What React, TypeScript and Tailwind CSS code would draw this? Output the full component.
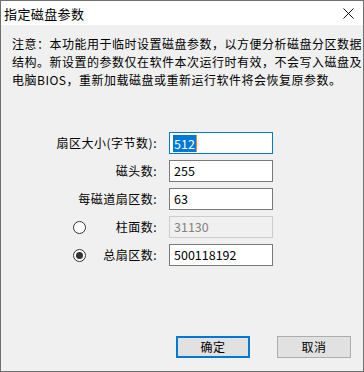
import React from "react";

const font = { fontFamily: '"Noto Sans CJK SC", "Noto Sans", sans-serif' };

type Row = {
  label: string;
  value: string;
  radio?: "on" | "off";
  disabled?: boolean;
  selected?: boolean;
};

const rows: Row[] = [
  { label: "扇区大小(字节数):", value: "512", selected: true },
  { label: "磁头数:", value: "255" },
  { label: "每磁道扇区数:", value: "63" },
  { label: "柱面数:", value: "31130", radio: "off", disabled: true },
  { label: "总扇区数:", value: "500118192", radio: "on" },
];

const noteLines = [
  "注意：本功能用于临时设置磁盘参数，以方便分析磁盘分区数据",
  "结构。新设置的参数仅在软件本次运行时有效，不会写入磁盘及",
  "电脑BIOS，重新加载磁盘或重新运行软件将会恢复原参数。",
];

function Radio({ checked }: { checked: boolean }) {
  return (
    <span className="w-[13px] h-[13px] rounded-full border border-[#333] bg-white flex items-center justify-center">
      {checked && <span className="w-[7px] h-[7px] rounded-full bg-[#333]" />}
    </span>
  );
}

function Field({ row }: { row: Row }) {
  let box = "border-[#7a7a7a] bg-white text-black";
  if (row.selected) box = "border-[#0078d7] bg-white text-black";
  if (row.disabled) box = "border-[#cccccc] bg-[#f0f0f0] text-[#838383]";
  return (
    <div className={`w-[104px] h-[22px] border flex items-center pl-[3px] text-[12.5px] ${box}`}>
      {row.selected ? (
        <>
          <span className="bg-[#0078d7] text-white leading-[17px] px-[1px]">{row.value}</span>
          <span className="w-[1px] h-[17px] bg-[#f08a24]" />
        </>
      ) : (
        <span className="px-[1px]">{row.value}</span>
      )}
    </div>
  );
}

export default function App() {
  return (
    <div className="w-[364px] h-[372px] border border-[#6f6f6f] bg-[#f0f0f0] flex flex-col text-black" style={font}>
      {/* title bar */}
      <div className="h-[24px] bg-white flex items-center justify-between pl-[3px] pr-[9px]">
        <span className="text-[13px] leading-none tracking-[0.4px]">指定磁盘参数</span>
        <svg width="11" height="11" viewBox="0 0 11 11">
          <path d="M0.5 0.5 L10.5 10.5 M10.5 0.5 L0.5 10.5" stroke="#111" strokeWidth="1" />
        </svg>
      </div>

      <div className="pl-[11px] pt-[10px] text-[12px] leading-[18px] tracking-[0.5px]">
        {noteLines.map((l) => (
          <div key={l} className="whitespace-nowrap">
            {l}
          </div>
        ))}
      </div>

      <div className="mt-[43px] grid grid-cols-[72px_13px_71px_104px] gap-x-0 gap-y-[6px]">
        {rows.map((r) =>
          r.radio ? (
            <React.Fragment key={r.label}>
              <span className="col-start-2 h-[22px] flex items-center">
                <Radio checked={r.radio === "on"} />
              </span>
              <span className="col-start-3 h-[22px] flex items-center justify-end text-[12px] tracking-[0.5px] whitespace-nowrap">
                {r.label}
              </span>
              <span className="ml-[12px]">
                <Field row={r} />
              </span>
            </React.Fragment>
          ) : (
            <React.Fragment key={r.label}>
              <span className="col-start-1 col-span-3 h-[22px] flex items-center justify-end text-[12px] tracking-[0.5px] whitespace-nowrap">
                {r.label}
              </span>
              <span className="ml-[12px]">
                <Field row={r} />
              </span>
            </React.Fragment>
          )
        )}
      </div>

      <div className="flex-1" />

      <div className="flex justify-end gap-[27px] pr-[12px] pb-[13px]">
        <button className="w-[74px] h-[22px] border-2 border-[#0078d7] bg-[#e1e1e1] text-[12px] tracking-[0.5px] flex items-center justify-center">
          确定
        </button>
        <button className="w-[74px] h-[22px] border border-[#adadad] bg-[#e1e1e1] text-[12px] tracking-[0.5px] flex items-center justify-center">
          取消
        </button>
      </div>
    </div>
  );
}
